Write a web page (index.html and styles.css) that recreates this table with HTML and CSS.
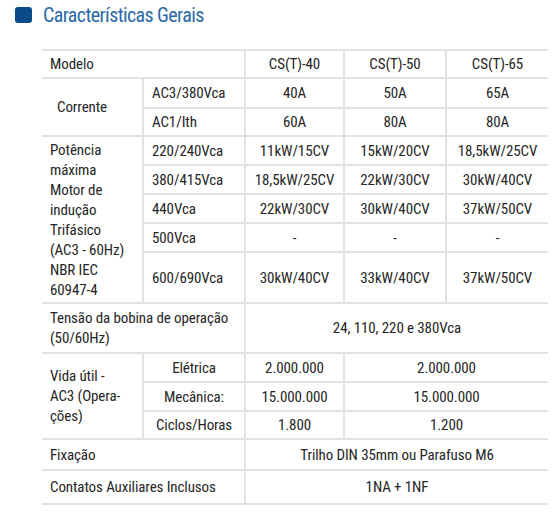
FILE: index.html
```html
<!DOCTYPE html>
<html lang="pt-BR">

<head>
    <meta charset="UTF-8">
    <meta name="viewport" content="width=device-width, initial-scale=1.0">
    <title>Características Gerais</title>
    <link rel="stylesheet" href="styles.css">
</head>

<body>
    <div class="title-bar">
        <span class="bullet"></span>
        <h2 class="title">Características Gerais</h2>
    </div>
    <table class="specs">
        <colgroup>
            <col class="c1">
            <col class="c2">
            <col class="c3">
            <col class="c4">
            <col class="c5">
        </colgroup>
        <tbody>
            <tr class="h28">
                <td colspan="2" class="left">Modelo</td>
                <td>CS(T)-40</td>
                <td>CS(T)-50</td>
                <td>CS(T)-65</td>
            </tr>
            <tr class="h30">
                <td rowspan="2" class="left indent">Corrente</td>
                <td class="left">AC3/380Vca</td>
                <td>40A</td>
                <td>50A</td>
                <td>65A</td>
            </tr>
            <tr class="h28">
                <td class="left">AC1/Ith</td>
                <td>60A</td>
                <td>80A</td>
                <td>80A</td>
            </tr>
            <tr class="h29">
                <td rowspan="5" class="left">Potência<br>máxima<br>Motor de<br>indução<br>Trifásico<br>(AC3 - 60Hz)<br>NBR IEC<br>60947-4</td>
                <td class="left">220/240Vca</td>
                <td>11kW/15CV</td>
                <td>15kW/20CV</td>
                <td>18,5kW/25CV</td>
            </tr>
            <tr class="h29">
                <td class="left">380/415Vca</td>
                <td>18,5kW/25CV</td>
                <td>22kW/30CV</td>
                <td>30kW/40CV</td>
            </tr>
            <tr class="h29">
                <td class="left">440Vca</td>
                <td>22kW/30CV</td>
                <td>30kW/40CV</td>
                <td>37kW/50CV</td>
            </tr>
            <tr class="h29">
                <td class="left">500Vca</td>
                <td>-</td>
                <td>-</td>
                <td>-</td>
            </tr>
            <tr class="h51">
                <td class="left">600/690Vca</td>
                <td>30kW/40CV</td>
                <td>33kW/40CV</td>
                <td>37kW/50CV</td>
            </tr>
            <tr class="h50">
                <td colspan="2" class="left">Tensão da bobina de operação<br>(50/60Hz)</td>
                <td colspan="3">24, 110, 220 e 380Vca</td>
            </tr>
            <tr class="h29">
                <td rowspan="3" class="left">Vida útil -<br>AC3 (Opera-<br>ções)</td>
                <td>Elétrica</td>
                <td>2.000.000</td>
                <td colspan="2">2.000.000</td>
            </tr>
            <tr class="h29">
                <td>Mecânica:</td>
                <td>15.000.000</td>
                <td colspan="2">15.000.000</td>
            </tr>
            <tr class="h28">
                <td>Ciclos/Horas</td>
                <td>1.800</td>
                <td colspan="2">1.200</td>
            </tr>
            <tr class="h31">
                <td colspan="2" class="left">Fixação</td>
                <td colspan="3">Trilho DIN 35mm ou Parafuso M6</td>
            </tr>
            <tr class="h34">
                <td colspan="2" class="left">Contatos Auxiliares Inclusos</td>
                <td colspan="3">1NA + 1NF</td>
            </tr>
        </tbody>
    </table>
</body>

</html>
```
FILE: styles.css
```css
* {
    margin: 0;
    padding: 0;
}

body {
    background: #fff;
    font-family: "Roboto Condensed", Roboto, "Liberation Sans", sans-serif;
    font-stretch: condensed;
    color: #262626;
}

.title-bar {
    display: flex;
    align-items: center;
    padding: 4px 0 0 15px;
    height: 22px;
}

.bullet {
    width: 17px;
    height: 16px;
    border-radius: 3px;
    background-color: #0b4a86;
    margin-right: 11px;
}

.title {
    font-size: 20px;
    font-weight: normal;
    letter-spacing: -0.6px;
    color: #2a69a6;
    line-height: 22px;
}

.specs {
    border-collapse: collapse;
    table-layout: fixed;
    width: 506px;
    margin: 23px 0 0 42px;
    border-left: hidden;
    border-right: hidden;
    font-size: 15px;
    letter-spacing: -0.1px;
    line-height: 20px;
}

.c1 { width: 101px; }
.c2 { width: 102px; }
.c3 { width: 99px; }
.c4 { width: 102px; }
.c5 { width: 102px; }

.specs td {
    border: 2px solid #e2e2e2;
    padding: 0 8px;
    text-align: center;
    white-space: nowrap;
}

.specs td.left {
    text-align: left;
}

.specs td.indent {
    padding-left: 15px;
}

.h28 { height: 28px; }
.h29 { height: 29px; }
.h30 { height: 30px; }
.h31 { height: 31px; }
.h34 { height: 34px; }
.h50 { height: 50px; }
.h51 { height: 51px; }
```
